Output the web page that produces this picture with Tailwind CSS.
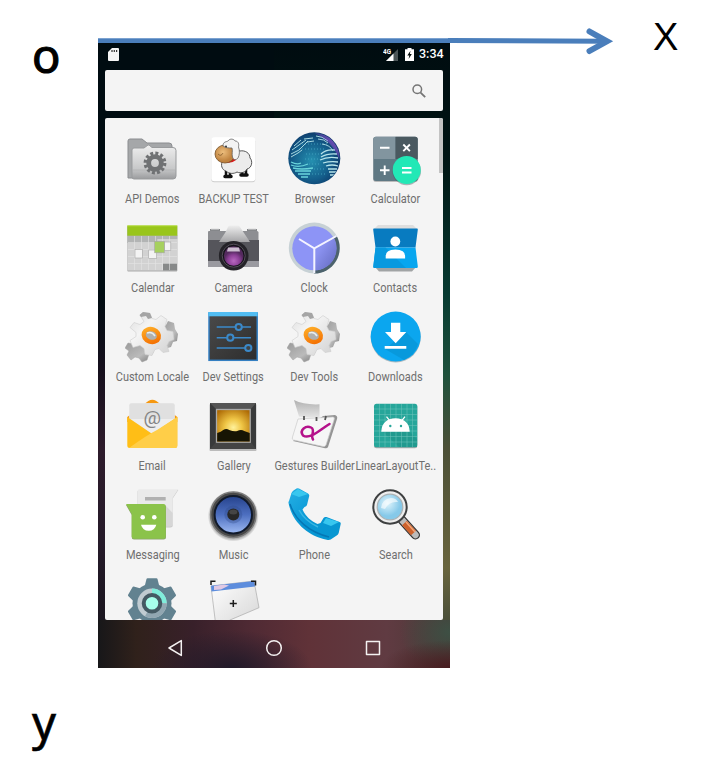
<!DOCTYPE html>
<html lang="en"><head><meta charset="utf-8"><title>Coordinate axes</title>
<script src="https://cdn.jsdelivr.net/npm/@tailwindcss/browser@4"></script></head>
<body class="bg-white">
<div class="relative flex h-[760px] w-[720px] overflow-hidden bg-white font-['Noto_Sans',sans-serif] text-black">
<!-- left axis labels -->
<div class="flex w-[98px] shrink-0 flex-col justify-between pt-[22px] pl-[32px]">
<div class="h-[66px] text-[47px] leading-[66px] [-webkit-text-stroke:1.1px_black]">o</div>
<div class="h-[66px] text-[47px] leading-[66px] [-webkit-text-stroke:0.6px_black]"><span class="relative top-[-5px]">y</span></div>
</div>
<!-- phone -->
<div class="mt-[43px] flex h-[625px] w-[352px] shrink-0 flex-col bg-[linear-gradient(to_bottom,#000c11_0%,#000c11_40%,#150f1c_52%,#2d1b2b_65%,#251a29_80%,#17141c_95%),linear-gradient(to_bottom,#000c10_0%,#001413_18%,#073a31_40%,#1e513c_53%,#4c5037_65%,#68643d_84%,#3d4637_96%)] bg-[length:50%_100%,100%_100%] bg-no-repeat font-['Roboto',sans-serif]">
<div class="flex h-[27px] shrink-0 items-center pr-[7px] pb-[5px] pl-[10px]">
<svg class="h-[13px] w-[11px]" viewBox="0 0 11 13"><path d="M4 0h6q1 0 1 1v11q0 1-1 1H1q-1 0-1-1V4z" fill="#f5f5f5"/><path d="M4 2v2M6.300 2v2M8.600 2v2" stroke="#333" stroke-width="1.200"/></svg>
<div class="flex-1"></div>
<svg class="h-[13px] w-[16px]" viewBox="0 0 16 13"><path d="M15 1v12H3z" fill="#4b5557"/><path d="M10.500 5.500V13H3z" fill="#fff"/><text x="0" y="5.500" font-size="7" font-weight="700" fill="#fff" textLength="8" lengthAdjust="spacingAndGlyphs">4G</text></svg>
<svg class="ml-[6px] h-[13px] w-[9px]" viewBox="0 0 9 13"><path d="M2.500 0h4v1.300H9V13H0V1.300h2.500z" fill="#fff"/><path d="M5.500 2.700L2.300 7.500h2L3.600 11l3.200-4.900H4.900z" fill="#06100f"/></svg>
<span class="mt-[-2px] ml-[5px] w-[24px] text-[12.5px] leading-[13px] font-medium text-white">3:34</span>
</div>
<div class="mx-[7px] flex h-[41px] shrink-0 items-center justify-end rounded-[2px] bg-[#f4f4f4] pr-[17px]"><svg class="h-[14px] w-[14px]" viewBox="0 0 14 14" fill="none" stroke="#757575" stroke-width="1.500"><circle cx="5.300" cy="5.300" r="4.300"/><path d="M8.600 8.600l4.600 4.600" stroke-width="1.800"/></svg></div>
<div class="relative mx-[7px] mt-[7px] h-[502px] shrink-0 overflow-hidden rounded-[2px] bg-[#f4f4f4] pl-[6.5px]">
<div class="absolute top-0 right-0 h-[55px] w-[4px] bg-[#c3c3c3]"></div>
<div class="grid w-[324px] auto-rows-[89px] grid-cols-4 [&_span]:ml-[1px] [&_span]:mt-[5px] [&_span]:block [&_span]:shrink-0 [&_span]:scale-x-[0.845] [&_span]:text-[13px] [&_span]:leading-[16px] [&_span]:whitespace-nowrap [&_span]:text-[#6f6f6f]">

<div class="flex flex-col items-center pt-[14px]"><svg class="h-[54px] w-[54px] shrink-0" viewBox="0 0 54 54"><defs><linearGradient id="fo" x2="0" y2="1"><stop stop-color="#efefef"/><stop offset=".7" stop-color="#c7c8c9"/><stop offset="1" stop-color="#9b9c9e"/></linearGradient></defs><path d="M3 46V9q0-2 2-2h12l5 4h22q3 0 3 3v32z" fill="#a5a7a9" stroke="#8b8d90"/><path d="M7 45V18q0-2 2-2h10l4-3h1l3 2.500h21q3 0 3 3V44q0 3-3 3H9q-2 0-2-2z" fill="url(#fo)" stroke="#999b9d"/><path d="M8 38h42" stroke="#aaa" stroke-width=".5"/><circle cx="30" cy="31" r="9.600" fill="none" stroke="#707274" stroke-width="3.600" stroke-dasharray="2.900 2.130"/><circle cx="30" cy="31" r="6.300" fill="none" stroke="#707274" stroke-width="4.800"/></svg><span>API Demos</span></div>

<div class="flex flex-col items-center pt-[14px]"><svg class="h-[54px] w-[54px] shrink-0" viewBox="0 0 54 54"><defs><radialGradient id="sh" cx=".4" cy=".4"><stop stop-color="#edbe7d"/><stop offset="1" stop-color="#bf823e"/></radialGradient></defs><rect x="5.300" y="6.300" width="44" height="44" rx="3" fill="#ccc"/><rect x="5.300" y="5.300" width="44" height="44" rx="3" fill="#fff"/><path d="M20 39v6M24 40v6M36 38v6M40 37v5" stroke="#111" stroke-width="2.500"/><path d="M19 44.500h6M35 43h6" stroke="#111" stroke-width="3.500" stroke-linecap="round"/><path d="M17 28C14 33 16 38 20 39 23 42 28 42 31 40 35 42 40 40 41 37 46 36 47 29 44 26 44 21 39 18 34 19 29 16 23 19 21 22Z" fill="#ececec" stroke="#444" stroke-width=".9"/><path d="M17 29q7 4 13-1v-3l-12 1z" fill="#d71818"/><ellipse cx="19" cy="22" rx="10" ry="9" fill="url(#sh)" stroke="#765026" stroke-width=".8"/><path d="M17 14C17 9 21 10 22 9 24 6 28 7 29 9 33 9 33 13 32.500 15 34 19 33.500 23 32 26 30 28.500 27 28 26.500 25 25.500 22 27 19 26 16 23 16 20 16 17 14Z" fill="#f3f3f3" stroke="#666" stroke-width=".8"/><circle cx="20" cy="14.500" r="1" fill="#333"/><path d="M12 22q3 3 5-1" stroke="#775022" fill="none" stroke-width=".7"/></svg><span>BACKUP TEST</span></div>

<div class="flex flex-col items-center pt-[14px]"><svg class="h-[54px] w-[54px] shrink-0" viewBox="0 0 54 54"><defs><radialGradient id="gl" cx=".45" cy=".55" r=".6"><stop stop-color="#2590b0"/><stop offset=".6" stop-color="#145e8b"/><stop offset="1" stop-color="#0b3363"/></radialGradient><linearGradient id="pu" x1=".3" y1=".6" x2="1" y2="0"><stop stop-color="#a34de0" stop-opacity="0"/><stop offset="1" stop-color="#c35cf5"/></linearGradient><clipPath id="gc"><circle cx="27.300" cy="26.300" r="25.500"/></clipPath></defs><circle cx="27.300" cy="26.300" r="26" fill="url(#gl)"/><g clip-path="url(#gc)" fill="none"><path d="M15 12h26M12 17h27M19 22h17M18 27h14M22 32h12M24 37h15M25 42h14" stroke="#49aac5" stroke-width=".8" stroke-dasharray="1 2"/><path d="M7 14l7-6M5 18l14-10M4 22l8-4 9-9M4 25l7-4 4-3M17 7l9-1M20 10l7-1M29 4q6 0 12 5M31 7q6 0 10 4M35 12q8 1 11 7" stroke="#a8d7df"/><path d="M34 22q5-5 14-4M34 25q7-4 16-3M33 28q8-4 18-2M36 31q7-2 15-1M39 34q6-2 12 0M41 37h9M42 40h7M43 43h4" stroke="#b6e3e9" stroke-width="1.300"/><path d="M4 30q6 3 10 1M4 33q8 3 17-1M6 36q8 2 20 0M8 39q8 0 16 0M11 42h12M14 45h7" stroke="#69d4db" stroke-width="1.300"/></g><path d="M27 1a25.500 25.500 0 0 1 25.500 27q-7-19-25.500-27z" fill="url(#pu)"/></svg><span>Browser</span></div>

<div class="flex flex-col items-center pt-[14px]"><svg class="h-[54px] w-[54px] shrink-0" viewBox="0 0 54 54"><rect x="5.300" y="5.500" width="44.400" height="44.400" rx="2.500" fill="#bbb"/><rect x="5.300" y="4.700" width="44.400" height="44.400" rx="2.500" fill="#5f7883"/><path d="M27.500 4.700H8q-2.700 0-2.700 2.700v19.500h22.200z" fill="#82959f"/><path d="M27.500 4.700H47q2.700 0 2.700 2.700v19.500H27.500z" fill="#4a5960"/><circle cx="38.700" cy="39" r="14.300" fill="#3a5055" opacity=".4"/><circle cx="38.700" cy="38" r="14" fill="#22e8b6"/><path d="M12 15.700h9.500M12 38.300h9.500M16.700 33.500v9.500M35.300 12.500l6.600 6.600M41.900 12.500l-6.600 6.600M34 36h9.500M34 40.500h9.500" stroke="#fff" stroke-width="1.900"/></svg><span>Calculator</span></div>

<div class="flex flex-col items-center pt-[14px]"><svg class="h-[54px] w-[54px] shrink-0" viewBox="0 0 54 54"><rect x="2.300" y="5" width="50" height="45.500" rx="1" fill="#aaa"/><rect x="2.300" y="14" width="50" height="35.500" fill="#d2d2d2"/><path d="M2.300 14h50v4h-20v4h-30z" fill="#b2b4b4"/><path d="M38 42h14v7.500H38z" fill="#878989"/><path d="M9.500 15v34M16.500 15v34M23.500 15v34M30.500 15v34M37.500 15v34M44.500 15v34M3 21.500h49M3 28.500h49M3 35.500h49M3 42.500h49" stroke="#e4e4e4" stroke-width=".6"/><rect x="2.300" y="4.700" width="50" height="10" fill="#99c51b"/><path d="M2.300 4.900h50" stroke="#aeda30"/><g stroke="#a5a5a5" stroke-width=".6" fill="#f3f3f3"><rect x="10" y="28.500" width="7.300" height="8.500"/><rect x="23.700" y="29" width="8" height="8.500"/><rect x="39.300" y="21" width="6.500" height="8.500"/><rect x="29.700" y="20.300" width="9.600" height="11.500" fill="#a6d05e"/></g></svg><span>Calendar</span></div>

<div class="flex flex-col items-center pt-[14px]"><svg class="h-[54px] w-[54px] shrink-0" viewBox="0 0 54 54"><defs><radialGradient id="le" cx=".5" cy=".75"><stop stop-color="#b868c0"/><stop offset=".6" stop-color="#8b3f96"/><stop offset="1" stop-color="#542a5e"/></radialGradient><linearGradient id="ca" x2="0" y2="1"><stop stop-color="#eee"/><stop offset="1" stop-color="#a4a4a6"/></linearGradient></defs><path d="M4 8h10v3H4zM41 8h10v3H41z" fill="#85878a"/><path d="M2 11q0-1 1-1h48q1.500 0 1.500 1.500V46H2z" fill="#8d8e92"/><path d="M2 19h51v21H2z" fill="#55555b"/><path d="M2 40h51v6H2z" fill="#9a9aa0"/><path d="M13 21l6-9 3-6q.5-1.500 2-1.500h8q1.500 0 2 1.500l4 6 6 9z" fill="url(#ca)"/><path d="M5 8h8M42 8h8" stroke="#ddd"/><circle cx="27.700" cy="34.700" r="14.800" fill="#242328"/><circle cx="27.700" cy="34.700" r="11.500" fill="#15131a" stroke="#55505a"/><circle cx="27.700" cy="35" r="9.800" fill="url(#le)"/><path d="M22 26.500h11l1 4H21z" fill="#d9cedd" opacity=".9"/></svg><span>Camera</span></div>

<div class="flex flex-col items-center pt-[14px]"><svg class="h-[54px] w-[54px] shrink-0" viewBox="0 0 54 54"><defs><linearGradient id="ck" x2="1" y2="1"><stop offset=".3" stop-color="#8b92f0"/><stop offset="1" stop-color="#6269bd"/></linearGradient></defs><circle cx="27.300" cy="27" r="25.500" fill="#c7d1d5"/><path d="M49.700 15A25.500 25.500 0 0 1 27.300 52.500V27z" fill="#4c626c"/><circle cx="27.300" cy="27.300" r="22" fill="#8d94f6"/><path d="M27.300 27.300L47 17A22 22 0 0 1 27.300 49.300z" fill="url(#ck)"/><path d="M12 18l15.300 9.300L49.500 15M27.300 27v25" stroke="#f4f4ff" stroke-width="2" fill="none"/></svg><span>Clock</span></div>

<div class="flex flex-col items-center pt-[14px]"><svg class="h-[54px] w-[54px] shrink-0" viewBox="0 0 54 54"><path d="M10 4h35l4 4H6z" fill="#dedede"/><path d="M7 46h41l-4 4.500H11z" fill="#a1a4a5"/><path d="M6 7.500h43q1 0 .8 1.200L47.500 26.500h-40L5.200 8.700Q5 7.500 6 7.500z" fill="#087bc0"/><path d="M7.500 26.500h40l2.300 19q0 1.500-1.200 1.500H6.500q-1.300 0-1.200-1.500z" fill="#08a6ef"/><path d="M7.500 26.500h10L38 47H6.500q-1.300 0-1.200-1.500z" fill="#0799df"/><circle cx="27.300" cy="20.500" r="4.900" fill="#fff"/><path d="M17.700 37.500v-2.500q0-6.500 9.700-6.500t9.700 6.500v2.500z" fill="#fff"/></svg><span>Contacts</span></div>

<div class="flex flex-col items-center pt-[14px]"><svg class="h-[54px] w-[54px] shrink-0" viewBox="0 0 54 54"><defs><linearGradient id="g1" x2="1" y2="1"><stop stop-color="#ddd"/><stop offset=".35" stop-color="#f4f4f4"/><stop offset="1" stop-color="#d0d0d0"/></linearGradient><linearGradient id="g2" x2="1" y2="1"><stop stop-color="#9a9a9a"/><stop offset=".6" stop-color="#bbb"/><stop offset="1" stop-color="#777"/></linearGradient><linearGradient id="or" x2="1" y2="1"><stop stop-color="#ffae28"/><stop offset="1" stop-color="#f36d00"/></linearGradient>
<g id="gears"><path d="M37 17l4-2 2-4 6 2 1 6 3 5-1 7-4 1-2 5-7 2z" fill="url(#g2)"/><path d="M3 33l6 1 3-1 9 3 6 2 1 5-4 1-2 6-5 2-3-4-4-1-4 3-4-5 2-4-4-3z" fill="url(#g2)" stroke="#a2a2a2" stroke-width=".5"/><path d="M15 5l3-2.500 7 1 2 5 4 1 5-4 6 4-2 7 2 4 6 1 1 8-5 2-2 4 2 6-6 1-4-4-4 1-3 6-7-1-1-6-4-3-7 2-3-7 6-4v-4l-6-5 4-5 6 2 4-3z" fill="url(#g1)" stroke="#ccc" stroke-width=".6"/><path d="M14.500 5l3.500-3 7 1 2 5-4 1-2-3-5 1z" fill="#a5a5a5"/><ellipse cx="26.300" cy="25.500" rx="7.800" ry="6.300" transform="rotate(20 26.300 25.500)" fill="#aeb0b0" stroke="url(#or)" stroke-width="4.300"/><path d="M22 23q5-2 8 3" stroke="#e9eef0" stroke-width="1.500" fill="none"/></g></defs><use href="#gears"/></svg><span>Custom Locale</span></div>

<div class="flex flex-col items-center pt-[14px]"><svg class="h-[54px] w-[54px] shrink-0" viewBox="0 0 54 54"><defs><linearGradient id="ds" x2="1" y2="1"><stop stop-color="#4a4a4a"/><stop offset="1" stop-color="#2d2d2d"/></linearGradient></defs><rect x="3" y="3" width="48.200" height="47.300" fill="url(#ds)" stroke="#347fc2" stroke-width="1.500"/><rect x="2.300" y="2" width="49.400" height="4.300" fill="#51bdf2"/><g stroke="#3b89c9" stroke-width="1.500" fill="#3e4346"><path d="M10.700 17H45M10.700 27.700H45M10.700 38H42"/><g stroke-width="2"><circle cx="32.700" cy="17" r="3.100"/><circle cx="24.300" cy="27.700" r="3.100"/><circle cx="42.300" cy="38" r="3.100"/></g></g></svg><span>Dev Settings</span></div>

<div class="flex flex-col items-center pt-[14px]"><svg class="h-[54px] w-[54px] shrink-0" viewBox="0 0 54 54"><use href="#gears"/></svg><span>Dev Tools</span></div>

<div class="flex flex-col items-center pt-[14px]"><svg class="h-[54px] w-[54px] shrink-0" viewBox="0 0 54 54"><circle cx="27.700" cy="27.500" r="25" fill="#aebbc1"/><circle cx="27.700" cy="26.500" r="25" fill="#0ba6ef"/><path d="M38 22L50 34Q47 45 36 50L17 39z" fill="#0899dc"/><path d="M23 12.700h9.300V22h6L27.700 33.300 17 22h6zM16.700 36h21.600v2.800H16.700z" fill="#fff"/></svg><span>Downloads</span></div>

<div class="flex flex-col items-center pt-[14px]"><svg class="h-[54px] w-[54px] shrink-0" viewBox="0 0 54 54"><path d="M2.300 18l21-16q4-2.500 8 0l21 16v5h-50z" fill="#f69810"/><path d="M4.300 6.500q0-2.200 2.200-2.200h41q2.200 0 2.200 2.200V36H4.300z" fill="#eee"/><path d="M4.300 20V6.500q0-2.200 2.200-2.200h41q2.200 0 2.200 2.200V20z" fill="#e0e0e0"/><text x="18.500" y="24.500" font-size="17.500" fill="#858585" font-family="Roboto" textLength="17.500" lengthAdjust="spacingAndGlyphs">@</text><path d="M2.300 18l25 17 25-17v28.500q0 2.500-2.500 2.500h-45q-2.500 0-2.500-2.500z" fill="#ffbe16"/><path d="M52.300 18v28.500q0 2.500-2.500 2.500H4q18-13 28-18z" fill="#ffce48"/></svg><span>Email</span></div>

<div class="flex flex-col items-center pt-[14px]"><svg class="h-[54px] w-[54px] shrink-0" viewBox="0 0 54 54"><defs><radialGradient id="su" cx=".5" cy=".55" r=".65"><stop stop-color="#fff19b"/><stop offset=".4" stop-color="#efc545"/><stop offset="1" stop-color="#ae6b05"/></radialGradient></defs><rect x="3.500" y="5" width="47" height="47" rx="1" fill="#bbb"/><rect x="4" y="4" width="46" height="46" fill="#393a3b"/><path d="M4 4l7 7h33l6-7z" fill="#555"/><path d="M4 50l7-8h33l6 8z" fill="#444"/><rect x="10.500" y="10.500" width="33.700" height="32.700" fill="url(#su)" stroke="#aaa" stroke-width="1.300"/><path d="M11.200 34q4-1 6-3 3-2 6 0 5 2 8 1 4-2 7 0l5.500 2v8.500H11.200z" fill="#171504"/></svg><span>Gallery</span></div>

<div class="flex flex-col items-center pt-[14px]"><svg class="h-[54px] w-[54px] shrink-0" viewBox="0 0 54 54"><defs><linearGradient id="pd" x2="0" y2="1"><stop stop-color="#b0b0b0"/><stop offset="1" stop-color="#e9e9e9"/></linearGradient></defs><path d="M36 17l12-1q3 1 2 4L41 48q-1 2-4 1L6 42l3-3z" fill="#949494"/><path d="M11 20l35-2q2 0 1 3l-8 25q-1 2-3 1.500L6.500 41q-2-.5-1-3z" fill="#f6f6f6" stroke="#ccc" stroke-width=".7"/><path d="M7 1q10 5 25.500 4.300V19.800L12 17.500z" fill="url(#pd)"/><path d="M17 17v4M29.500 18v4M39 17l-1 4" stroke="#555" stroke-width="1.800"/><path d="M42.500 25C34 30 23 41 16 36.500 12 31 19 26 24 28.500 29 31 23 36 26 40.500" fill="none" stroke="#b5128b" stroke-width="2.500" stroke-linecap="round"/></svg><span>Gestures Builder</span></div>

<div class="flex flex-col items-center pt-[14px]"><svg class="h-[54px] w-[54px] shrink-0" viewBox="0 0 54 54"><rect x="6" y="5.700" width="43.300" height="43.500" rx="2.500" fill="#aaa"/><rect x="6" y="4.700" width="43.300" height="43.500" rx="2.500" fill="#26a69a"/><path d="M41 32l8 8v8H31L14 32z" fill="#219a8f"/><path d="M11.500 5v43M17 5v43M22.500 5v43M28 5v43M33.500 5v43M39 5v43M44.500 5v43M6 10h43M6 15.500h43M6 21h43M6 26.500h43M6 32h43M6 37.500h43M6 43h43" stroke="#70c5bd" stroke-width=".5"/><path d="M14 32q1-11.500 13.500-12Q40 20.500 41 32zM18.500 17.700l4 5M37 17.700l-4 5" fill="#fff" stroke="#fff" stroke-width="1.300"/><circle cx="22.300" cy="27" r="1.200" fill="#26a69a"/><circle cx="33" cy="27" r="1.200" fill="#26a69a"/></svg><span>LinearLayoutTe..</span></div>

<div class="flex flex-col items-center pt-[14px]"><svg class="h-[54px] w-[54px] shrink-0" viewBox="0 0 54 54"><path d="M15 2h38.300l-5.600 8.500V37q0 2.500-2.500 2.500H12.300V4.500Q12.300 2 15 2z" fill="#c8c8c8"/><path d="M15 1.300h38.300l-5.600 8.500v26q0 2.500-2.500 2.500H12.300V4Q12.300 1.300 15 1.300z" fill="#eaeaea"/><path d="M40 17l7.700 8v13.300H40z" fill="#d6d6d6"/><path d="M20 9h20.700v3.500H20z" fill="#b0b0b0"/><path d="M1 17h38q2 0 2 2v30q0 2.500-2.500 2.500H9Q6.700 51.500 6.700 49V27z" fill="#8ca36d"/><path d="M1 16h37.500q2.200 0 2.200 2.200V48.500q0 2.200-2.200 2.200H9q-2.300 0-2.300-2.200V26z" fill="#8bc34a"/><circle cx="17.700" cy="29.300" r="2.300" fill="#fff"/><circle cx="29.300" cy="29.300" r="2.300" fill="#fff"/><path d="M16 36.700h15.300q-1.500 6-7.600 6t-7.700-6z" fill="#fff"/></svg><span>Messaging</span></div>

<div class="flex flex-col items-center pt-[14px]"><svg class="h-[54px] w-[54px] shrink-0" viewBox="0 0 54 54"><defs><linearGradient id="mu" x2="0" y2="1"><stop stop-color="#25428b"/><stop offset=".5" stop-color="#4d6fc0"/><stop offset="1" stop-color="#9db9f2"/></linearGradient><radialGradient id="ms"><stop offset=".85" stop-color="#999"/><stop offset="1" stop-color="#f4f4f4"/></radialGradient></defs><circle cx="27.300" cy="28" r="25.500" fill="url(#ms)"/><circle cx="27.300" cy="26.700" r="22.700" fill="#484848" stroke="#7c7c7c" stroke-width="1.500"/><circle cx="27.300" cy="26.700" r="18.700" fill="url(#mu)" stroke="#111a2b" stroke-width="2"/><circle cx="27.300" cy="26.500" r="9" fill="#2c4582" opacity=".3"/><circle cx="27.300" cy="26.500" r="6" fill="#272727"/><ellipse cx="27.300" cy="24" rx="4" ry="2.500" fill="#454545"/></svg><span>Music</span></div>

<div class="flex flex-col items-center pt-[14px]"><svg class="h-[54px] w-[54px] shrink-0" viewBox="0 0 54 54"><defs><linearGradient id="ph" x2="1" y2="1"><stop stop-color="#26b1e5"/><stop offset=".5" stop-color="#0896d4"/><stop offset="1" stop-color="#0897d0"/></linearGradient></defs><path d="M12 .5l9 5q1.500 1 1.200 2.500L20 17q-.5 1.500-2.500 2l-2 2.500C19 29 24 33 30.500 36l3-1 3-5q1-1.500 3-1l13 5q1.500.5 1.200 2l-2 9q-.5 1.500-2 2.500l-6 4q-1.500.7-4 .2C21 48 5 34 1.500 15q-.2-1 .5-2L4.500 5q.5-1.500 2-2.500l3-2q1-.7 2.500 0z" fill="url(#ph)"/><path d="M11 1l10 5-9 3-8-3zM39 30l13 4-8 4-8-3z" fill="#38c7ef"/><path d="M3 16C8 32 22 44 42 49" stroke="#0577b5" stroke-width="1.500" fill="none"/><path d="M12 22Q18 33 31 39" stroke="#38b7e3" stroke-width="1.500" fill="none"/></svg><span>Phone</span></div>

<div class="flex flex-col items-center pt-[14px]"><svg class="h-[54px] w-[54px] shrink-0" viewBox="0 0 54 54"><defs><radialGradient id="mg" cx=".4" cy=".35"><stop stop-color="#e1f5fc"/><stop offset="1" stop-color="#86c9e9"/></radialGradient></defs><path d="M34 32l13.500 15" stroke="#333" stroke-width="9" stroke-linecap="round"/><path d="M34 32l13.500 15" stroke="#bbb" stroke-width="6.500" stroke-linecap="round"/><path d="M36.500 35l9 10" stroke="#cd622d" stroke-width="6.500"/><path d="M38 34l9 10" stroke="#f3a577" stroke-width="1.500"/><circle cx="22" cy="19" r="16.700" fill="#eee" stroke="#3e4041" stroke-width="2"/><circle cx="22" cy="19" r="12.800" fill="url(#mg)" stroke="#aab2b5" stroke-width="1.200"/><path d="M13 20Q14 11 23 10q5 0 7 4-9-1-13 7z" fill="#fff" opacity=".6"/></svg><span>Search</span></div>

<div class="flex flex-col items-center pt-[14px]"><svg class="h-[54px] w-[54px] shrink-0" viewBox="0 0 54 54"><g fill="#628290"><circle cx="27" cy="26.300" r="19.500"/><g id="tooth"><path d="M19.500 10l2-8q.3-.7 1-.7h9q.7 0 1 .7l2 8z"/><path d="M19.500 42.600l2 8q.3.700 1 .7h9q.7 0 1-.7l2-8z"/></g><use href="#tooth" transform="rotate(60 27 26.300)"/><use href="#tooth" transform="rotate(120 27 26.300)"/></g><circle cx="27" cy="26.300" r="14.700" fill="#c0cbd1"/><path d="M27 26.300V11.600A14.700 14.700 0 0 1 41.700 26.300z" fill="#80eddb"/><path d="M41.700 26.300A14.700 14.700 0 0 1 20 39.200L27 26.300z" fill="#91a6b1"/><circle cx="27" cy="26.300" r="8.300" fill="#a7ffeb" stroke="#455a64" stroke-width="4"/></svg></div>

<div class="flex flex-col items-center pt-[14px]"><svg class="h-[54px] w-[54px] shrink-0" viewBox="0 0 54 54"><defs><linearGradient id="wi" x2="1" y2="1"><stop stop-color="#fff"/><stop offset="1" stop-color="#d5d5d5"/></linearGradient></defs><path d="M5 9l43-5 5 26.700L24 43l-9 7h-5z" fill="url(#wi)" stroke="#aaa" stroke-width=".7"/><path d="M5 8.700L48 4l1 5.500-43.500 5z" fill="#5d8ddd"/><path d="M8 9l10-1.500 5 1-8 4-7 .5z" fill="#e0c9e4"/><path d="M5 8V4.300h4.500M45 4.300h4.500V8.500M27.300 23v7M23.800 26.500h7" fill="none" stroke="#1b1b1b" stroke-width="1.500"/></svg></div>
</div></div>
<!-- navigation bar -->
<div class="flex flex-1 items-center bg-[radial-gradient(ellipse_70px_28px_at_100%_100%,#491c20,transparent),radial-gradient(ellipse_50px_40px_at_100%_25%,#3d5044,transparent),radial-gradient(ellipse_80px_38px_at_38%_100%,#211a29,transparent),linear-gradient(to_right,#171719_0%,#30211b_11%,#38202a_27%,#502a34_44%,#603238_60%,#603b42_82%,#4b3836_100%)] pl-[69px]">
<svg class="mt-[7px] h-[18px] w-[214px]" viewBox="0 0 214 18" fill="none" stroke="#f4f1f1" stroke-width="1.500" stroke-linejoin="round"><path d="M14.300 1.600v14.800L2 9z"/><circle cx="107" cy="9" r="7.300"/><rect x="199.500" y="2.500" width="13" height="13"/></svg>
</div>
</div>
<!-- right axis label -->
<div class="flex-1 pt-[15px] pl-[203px] font-['Liberation_Sans',sans-serif] text-[38px] leading-[44px]">X</div>
<svg class="absolute top-[24px] left-[98px] h-[34px] w-[520px]" viewBox="0 0 520 34" fill="none"><path d="M0 16.500H352L508 17.300" stroke="#4a7ebb" stroke-width="5"/><path d="M0 14.500h350" stroke="#7ca2d0"/><path d="M491.500 7.500L509 17.300 491.500 27" stroke="#4a7ebb" stroke-width="6" stroke-linecap="round"/></svg>
</div>
</body></html>
